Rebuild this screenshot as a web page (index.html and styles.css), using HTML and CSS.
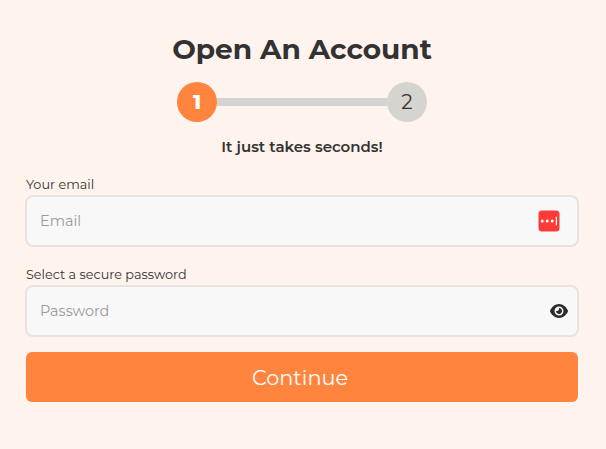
FILE: index.html
```html
<!DOCTYPE html>
<html lang="en">
<head>
    <meta charset="UTF-8">
    <meta name="viewport" content="width=device-width, initial-scale=1.0">
    <title>Open An Account</title>
    <link rel="stylesheet" href="styles.css">
</head>
<body>
    <form class="signup-form">
        <h1>Open An Account</h1>
        <div class="steps">
            <div class="step active">1</div>
            <div class="step-line"></div>
            <div class="step">2</div>
        </div>
        <p class="subtitle">It just takes seconds!</p>

        <label for="email">Your email</label>
        <div class="field">
            <input type="email" id="email" placeholder="Email">
            <svg class="manager-icon" width="22" height="22" viewBox="0 0 22 22">
                <rect x="0.5" y="0.5" width="21" height="21" rx="3.5" fill="#fb3b36"/>
                <circle cx="4.2" cy="11" r="1.5" fill="#fff"/>
                <circle cx="9.2" cy="11" r="1.5" fill="#fff"/>
                <circle cx="14.2" cy="11" r="1.5" fill="#fff"/>
                <rect x="17.8" y="6.8" width="1.2" height="8.4" rx="0.5" fill="#fff"/>
            </svg>
        </div>

        <label for="password">Select a secure password</label>
        <div class="field field-password">
            <input type="password" id="password" placeholder="Password">
            <svg class="eye-icon" width="18" height="16" viewBox="0 0 576 512">
                <path fill="#292b2c" d="M288 32c-80.800 0-145.500 36.800-192.600 80.600C48.600 156 17.300 208 2.500 243.700c-3.300 7.900-3.300 16.700 0 24.600C17.300 304 48.600 356 95.400 399.400C142.500 443.200 207.200 480 288 480s145.500-36.800 192.600-80.600c46.800-43.500 78.100-95.400 93-131.100c3.300-7.900 3.300-16.700 0-24.600c-14.900-35.700-46.200-87.700-93-131.100C433.500 68.800 368.800 32 288 32zM144 256a144 144 0 1 1 288 0 144 144 0 1 1-288 0zm144-64c0 35.300-28.700 64-64 64-7.100 0-13.900-1.200-20.300-3.300-5.500-1.800-11.900 1.600-11.700 7.400.3 6.900 1.300 13.800 3.200 20.700 13.700 51.200 66.400 81.600 117.600 67.900s81.600-66.400 67.900-117.600c-11.100-41.500-47.800-69.400-88.600-71.100-5.800-.2-9.200 6.100-7.400 11.700 2.100 6.400 3.300 13.200 3.300 20.300z"/>
            </svg>
        </div>

        <button type="button">Continue</button>
    </form>
</body>
</html>
```

FILE: styles.css
```css
* {
    box-sizing: border-box;
}
body {
    font-family: Montserrat, Inter, sans-serif;
    background-color: #fff3ee;
    color: #323232;
    margin: 0;
}
.signup-form {
    width: 554px;
    margin-left: 25px;
    padding-top: 32px;
    display: flex;
    flex-direction: column;
}
h1 {
    margin: 0;
    font-size: 28px;
    font-weight: 700;
    line-height: 35px;
    text-align: center;
}
.steps {
    display: flex;
    align-items: center;
    justify-content: center;
    margin-top: 15px;
}
.step {
    width: 40px;
    height: 40px;
    border-radius: 50%;
    background: #d6d4d0;
    font-size: 20px;
    font-weight: 400;
    line-height: 40px;
    text-align: center;
}
.step.active {
    background: #ff853e;
    color: white;
    font-weight: 800;
}
.step-line {
    width: 170px;
    height: 8px;
    background: #d6d4d0;
}
.subtitle {
    margin: 15px 0 0;
    font-size: 15px;
    font-weight: 600;
    line-height: 20px;
    text-align: center;
}
label {
    margin-top: 18px;
    padding-left: 1px;
    font-size: 12.8px;
    font-weight: 400;
    line-height: 20px;
}
.field {
    display: flex;
    align-items: center;
    height: 52px;
    padding: 0 17px 0 13px;
    background: #f8f8f8;
    border: 2px solid #ebe1de;
    border-radius: 8px;
}
.field-password {
    padding-right: 9px;
}
input {
    flex: 1;
    min-width: 0;
    padding: 0;
    border: none;
    outline: none;
    background: transparent;
    font-family: inherit;
    font-size: 14.4px;
    line-height: 20px;
}
input::placeholder {
    color: #9b9b9b;
}
button {
    height: 50px;
    margin: 15px 1px 0;
    padding: 0 4px 0 0;
    border: none;
    border-radius: 6px;
    background: #ff853e;
    color: white;
    font-family: inherit;
    font-size: 20.8px;
    cursor: pointer;
}
```
